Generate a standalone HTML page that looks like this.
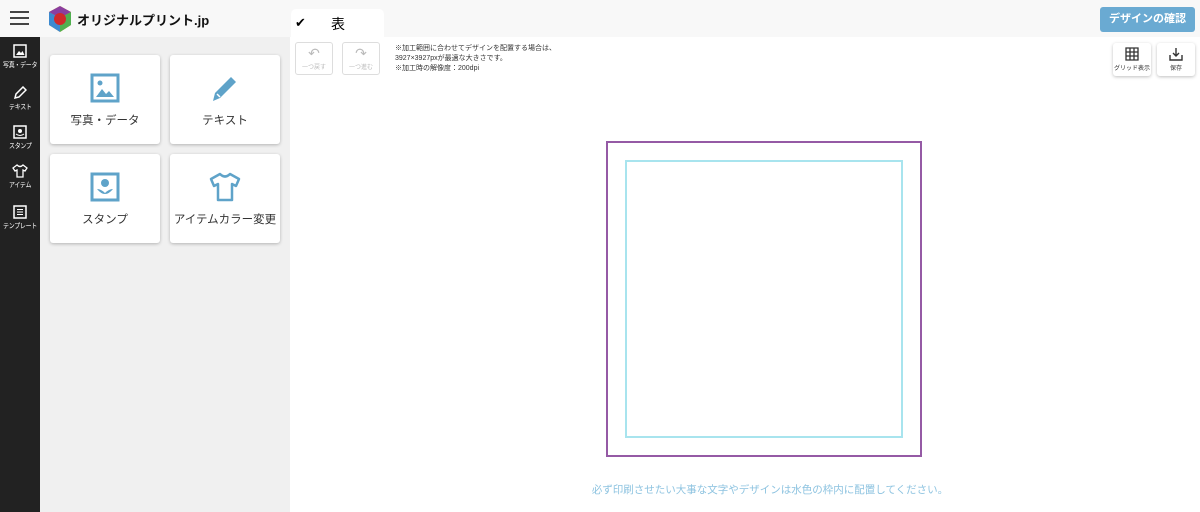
<!DOCTYPE html><html><head><meta charset="utf-8"><style>
*{margin:0;padding:0;box-sizing:border-box}
body{width:1200px;height:512px;overflow:hidden;background:#fff;font-family:"Liberation Sans","Noto Sans CJK JP",sans-serif;position:relative}
.top{position:absolute;left:0;top:0;width:1200px;height:37px;background:#f8f8f8}
.side{position:absolute;left:0;top:37px;width:40px;height:475px;background:#222}
.panel{position:absolute;left:40px;top:37px;width:250px;height:475px;background:#f0f0f0}
.si{position:absolute;left:0;width:40px;text-align:center;color:#fff;font-size:7px;white-space:nowrap;line-height:9px}
.si b{display:inline-block;font-weight:normal;transform:scaleX(.85);letter-spacing:-.3px}
.card{position:absolute;width:110px;height:89px;background:#fff;border-radius:3px;box-shadow:0 1px 3px rgba(0,0,0,.25);text-align:center;font-size:11.5px;color:#333}
.card svg{position:absolute;left:39px;top:17px}
.card span{position:absolute;left:0;right:0;top:57px}
.btn{position:absolute;width:38px;height:33px;border:1px solid #ddd;border-radius:3px;font-size:6px;color:#bbb;text-align:center}
.rb{position:absolute;width:38px;height:33px;background:#fff;border-radius:3px;box-shadow:0 1px 3px rgba(0,0,0,.25);font-size:6px;color:#333;text-align:center}
</style></head><body>
<div class="top"></div>
<div style="position:absolute;left:10px;top:11px;width:19px;height:2px;background:#444;box-shadow:0 6px 0 #444,0 12px 0 #444"></div>
<svg style="position:absolute;left:48px;top:6px" width="24" height="26" viewBox="0 0 24 26"><polygon points="12,0 23,6 23,19 12,26 1,19 1,6" fill="#f0b020"/><polygon points="12,0 23,6 12,12 1,6" fill="#8a3ea0"/><polygon points="1,6 12,12 12,26 1,19" fill="#3c8ad0"/><polygon points="23,6 12,12 12,26 23,19" fill="#50b050"/><circle cx="12" cy="13" r="6" fill="#d02a2a"/></svg>
<div style="position:absolute;left:77px;top:10px;font-size:13px;font-weight:bold;color:#111">オリジナルプリント.jp</div>
<div style="position:absolute;left:291px;top:9px;width:93px;height:30px;background:#fff;border-radius:5px 5px 0 0"></div>
<div style="position:absolute;left:295px;top:15px;font-size:13px">✔</div>
<div style="position:absolute;left:331px;top:14px;font-size:14px">表</div>
<div style="position:absolute;left:1100px;top:7px;width:95px;height:25px;background:#6aaad2;border-radius:3px;color:#fff;font-size:11px;font-weight:bold;text-align:center;line-height:25px">デザインの確認</div>
<div class="side"></div>
<div class="si" style="top:44px"><svg width="14" height="14" viewBox="0 0 14 14"><rect x="1" y="1" width="12" height="12" fill="none" stroke="#fff" stroke-width="1.5"/><path d="M3 11l3-4 2 2 1.5-2 2 4z" fill="#fff"/></svg><br><b>写真・データ</b></div>
<div class="si" style="top:86px"><svg width="14" height="14" viewBox="0 0 14 14"><path d="M2 12l1-4 7-7 3 3-7 7z" fill="none" stroke="#fff" stroke-width="1.5"/></svg><br><b>テキスト</b></div>
<div class="si" style="top:125px"><svg width="14" height="14" viewBox="0 0 14 14"><rect x="1" y="1" width="12" height="12" fill="none" stroke="#fff" stroke-width="1.5"/><circle cx="7" cy="6" r="2" fill="#fff"/><path d="M3 9q4 3 8 0" stroke="#fff" fill="none"/></svg><br><b>スタンプ</b></div>
<div class="si" style="top:164px"><svg width="16" height="14" viewBox="0 0 16 14"><path d="M5 1L1 4l2 3 2-1v7h6V6l2 1 2-3-4-3q-3 3-6 0z" fill="none" stroke="#fff" stroke-width="1.3"/></svg><br><b>アイテム</b></div>
<div class="si" style="top:205px"><svg width="14" height="14" viewBox="0 0 14 14"><rect x="1" y="1" width="12" height="12" fill="none" stroke="#fff" stroke-width="1.5"/><path d="M4 4.5h6M4 7h6M4 9.5h6" stroke="#fff"/></svg><br><b>テンプレート</b></div>
<div class="panel"></div>
<div class="card" style="left:50px;top:55px"><svg width="32" height="32" viewBox="0 0 32 32"><rect x="3" y="3" width="26" height="26" fill="none" stroke="#5fa3c9" stroke-width="3"/><circle cx="11" cy="11" r="2.5" fill="#5fa3c9"/><path d="M7 25l6-8 4 5 3-3 5 6z" fill="#5fa3c9"/></svg><span>写真・データ</span></div>
<div class="card" style="left:170px;top:55px"><svg width="32" height="32" viewBox="0 0 32 32"><path d="M4 29l2-8L22 5l5 5-16 16z" fill="#5fa3c9"/><path d="M8 22l3 3" stroke="#fff" stroke-width="1.5"/></svg><span>テキスト</span></div>
<div class="card" style="left:50px;top:154px"><svg width="32" height="32" viewBox="0 0 32 32"><rect x="3" y="3" width="26" height="26" fill="none" stroke="#5fa3c9" stroke-width="3"/><circle cx="16" cy="12" r="4" fill="#5fa3c9"/><path d="M8 18q8 10 16 0q-4 0-8 4q-4-4-8-4z" fill="#5fa3c9"/></svg><span>スタンプ</span></div>
<div class="card" style="left:170px;top:154px"><svg width="32" height="32" viewBox="0 0 32 32"><path d="M11 3L2 8l3 7 4-2v16h14V13l4 2 3-7-9-5q-5 5-10 0z" fill="none" stroke="#5fa3c9" stroke-width="2.5" stroke-linejoin="round"/></svg><span>アイテムカラー変更</span></div>
<div class="btn" style="left:295px;top:42px"><div style="font-size:14px;margin-top:2px">↶</div>一つ戻す</div>
<div class="btn" style="left:342px;top:42px"><div style="font-size:14px;margin-top:2px">↷</div>一つ進む</div>
<div style="position:absolute;left:395px;top:44px;font-size:7px;line-height:10px;color:#333">※加工範囲に合わせてデザインを配置する場合は、<br>3927×3927pxが最適な大きさです。<br>※加工時の解像度：200dpi</div>
<div class="rb" style="left:1113px;top:43px"><svg style="margin-top:4px" width="14" height="14" viewBox="0 0 14 14"><path d="M1 1h12v12H1zM1 5h12M1 9h12M5 1v12M9 1v12" fill="none" stroke="#333" stroke-width="1.3"/></svg><br>グリッド表示</div>
<div class="rb" style="left:1157px;top:43px"><svg style="margin-top:4px" width="14" height="14" viewBox="0 0 14 14"><path d="M7 1v8M4 6l3 3 3-3M1 8v5h12V8" fill="none" stroke="#333" stroke-width="1.4"/></svg><br>保存</div>
<div style="position:absolute;left:606px;top:141px;width:316px;height:316px;border:2px solid #955aa5"></div>
<div style="position:absolute;left:625px;top:160px;width:278px;height:278px;border:2px solid #a8e4ee"></div>
<div style="position:absolute;left:540px;top:482px;width:460px;text-align:center;font-size:10.5px;color:#8dc3e0;white-space:nowrap">必ず印刷させたい大事な文字やデザインは水色の枠内に配置してください。</div>
</body></html>
